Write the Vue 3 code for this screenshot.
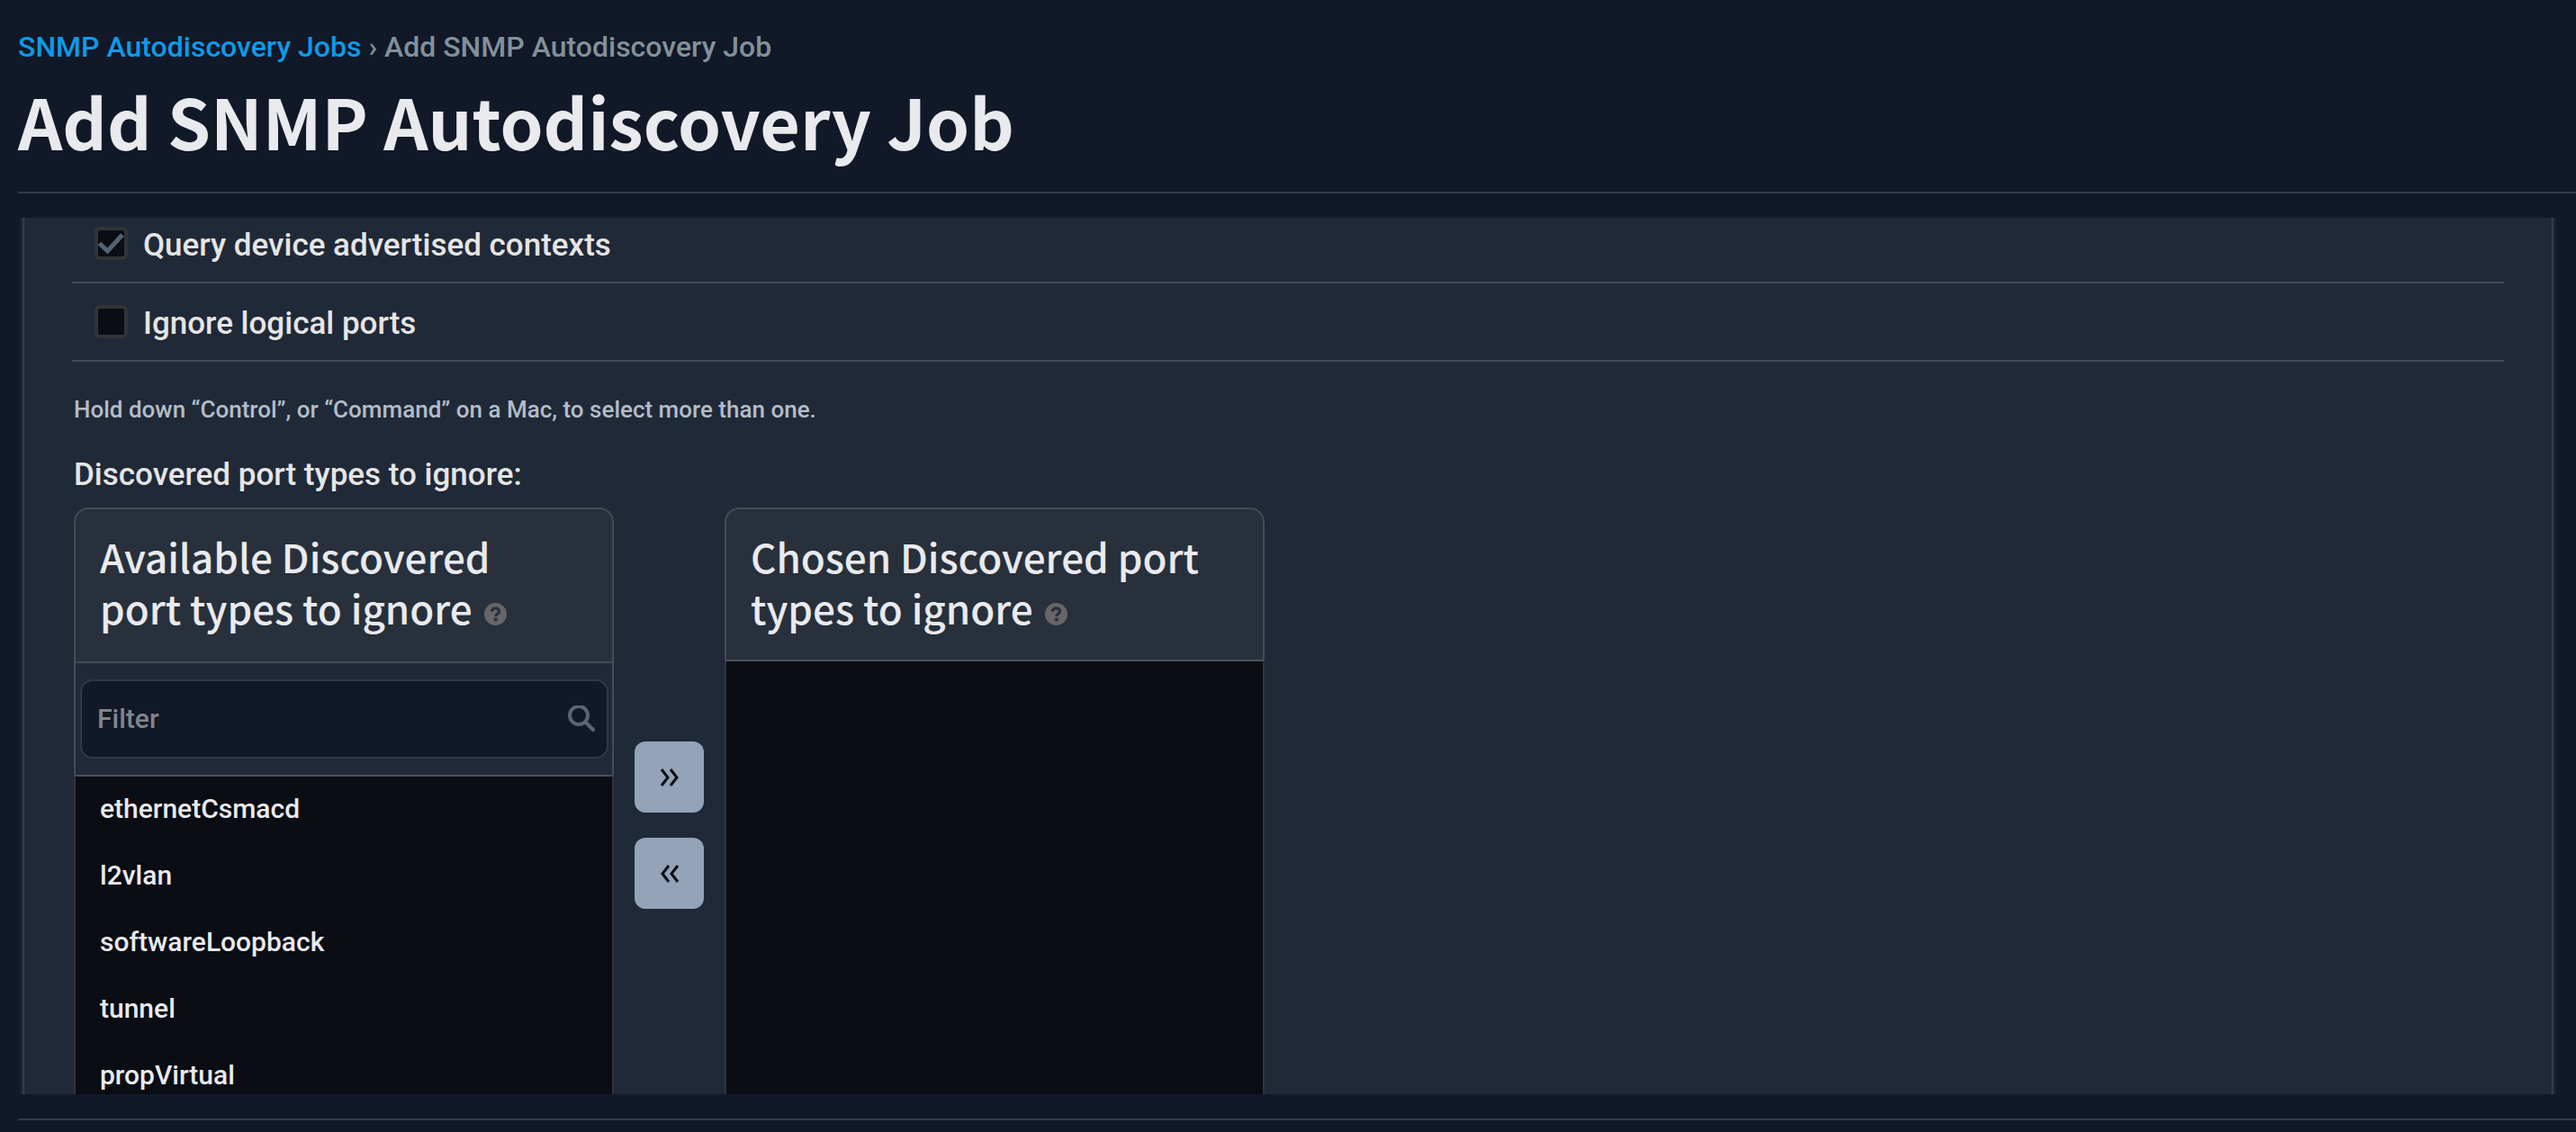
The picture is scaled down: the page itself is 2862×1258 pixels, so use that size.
<script setup>
import { ref } from 'vue'

const queryContexts = ref(true)
const ignoreLogical = ref(false)
const filter = ref('')
const portTypes = ['ethernetCsmacd', 'l2vlan', 'softwareLoopback', 'tunnel', 'propVirtual']
</script>

<template>
  <div class="page">
    <header class="page-header">
      <nav class="breadcrumbs" aria-label="Breadcrumb">
        <a href="#">SNMP Autodiscovery Jobs</a> › Add SNMP Autodiscovery Job
      </nav>
      <h1>Add SNMP Autodiscovery Job</h1>
    </header>

    <main class="scroller">
      <form class="panel" @submit.prevent>
        <div class="check-row">
          <input id="query-contexts" v-model="queryContexts" type="checkbox" />
          <label for="query-contexts">Query device advertised contexts</label>
        </div>
        <div class="check-row">
          <input id="ignore-logical" v-model="ignoreLogical" type="checkbox" />
          <label for="ignore-logical">Ignore logical ports</label>
        </div>

        <section class="field">
          <p class="help">Hold down “Control”, or “Command” on a Mac, to select more than one.</p>
          <label class="field-label" for="ports-available">Discovered port types to ignore:</label>

          <div class="selector">
            <div class="box">
              <h2 class="box-title">
                Available Discovered port types to ignore
                <svg class="hint" viewBox="0 0 24 24" aria-hidden="true">
                  <circle cx="12" cy="12" r="12" />
                  <path d="M8 9.200C8.200 6.900 9.800 5.800 12 5.800c2.300 0 3.900 1.200 3.900 3.200 0 2.700-3.700 2.800-3.700 5.400" />
                  <rect x="10.500" y="16" width="3.500" height="3.500" />
                </svg>
              </h2>
              <div class="filter-row">
                <div class="filter">
                  <input v-model="filter" type="text" placeholder="Filter" aria-label="Filter" />
                  <svg class="search" viewBox="0 0 30 30" aria-hidden="true">
                    <circle cx="12" cy="11" r="10" />
                    <path d="M19.500 18.500L28 27" />
                  </svg>
                </div>
              </div>
              <select id="ports-available" class="list" multiple>
                <option v-for="name in portTypes" :key="name" :value="name">{{ name }}</option>
              </select>
            </div>

            <div class="movers">
              <button type="button" aria-label="Choose">
                <svg viewBox="0 0 24 20" aria-hidden="true"><path d="M3 1l7 9-7 9M13 1l7 9-7 9" /></svg>
              </button>
              <button type="button" aria-label="Remove">
                <svg viewBox="0 0 24 20" aria-hidden="true"><path d="M11 1l-7 9 7 9M21 1l-7 9 7 9" /></svg>
              </button>
            </div>

            <div class="box">
              <h2 class="box-title chosen">
                Chosen Discovered port types to ignore
                <svg class="hint" viewBox="0 0 24 24" aria-hidden="true">
                  <circle cx="12" cy="12" r="12" />
                  <path d="M8 9.200C8.200 6.900 9.800 5.800 12 5.800c2.300 0 3.900 1.200 3.900 3.200 0 2.700-3.700 2.800-3.700 5.400" />
                  <rect x="10.500" y="16" width="3.500" height="3.500" />
                </svg>
              </h2>
              <select class="list" multiple aria-label="Chosen Discovered port types to ignore"></select>
            </div>
          </div>
        </section>
      </form>
    </main>

    <footer class="page-footer"></footer>
  </div>
</template>

<style>
body {
  margin: 0;
  background: #111827;
}
</style>

<style scoped>
* {
  box-sizing: border-box;
}

.page {
  display: flex;
  flex-direction: column;
  height: 100vh;
  background: #111827;
  color: #e5e5e5;
  font-family: Roboto, "Liberation Sans", sans-serif;
  font-size: 35px;
  font-weight: 500;
}

.page-header {
  margin-left: 20px;
  padding: 32px 0 29px;
  border-bottom: 2px solid #333a49;
}

.breadcrumbs {
  font-size: 32px;
  line-height: 40px;
  color: #82919b;
}

.breadcrumbs a {
  color: #0c9be8;
  text-decoration: none;
}

h1 {
  margin: 16px 0 4px;
  font: 700 77px/92px "Noto Sans CJK SC", "Noto Sans", sans-serif;
  color: #e9eaee;
}

.scroller {
  flex: 1;
  min-height: 0;
  margin: 27px 20px;
  padding: 0 6px;
  overflow: hidden;
}

.panel {
  margin-top: -14px;
  padding: 0 53px;
  border: solid #434a55;
  border-width: 0 1px;
  background: #202937;
  box-shadow: 0 0 6px #4b515e;
}

.check-row {
  display: flex;
  align-items: center;
  gap: 17px;
  height: 87px;
  padding-left: 25px;
  border-bottom: 2px solid #414958;
}

.check-row label {
  padding-top: 4px;
  line-height: 40px;
}

.check-row input {
  appearance: none;
  width: 37px;
  height: 37px;
  margin: 0;
  border: 4px solid #333437;
  border-radius: 6px;
  background: #0a0d14;
}

.check-row input:checked {
  background: #0a0d14 url("data:image/svg+xml,%3Csvg xmlns='http://www.w3.org/2000/svg' viewBox='0 0 29 29'%3E%3Cpath d='M1.500 14.500L10.500 23 27 5' fill='none' stroke='%23566270' stroke-width='5'/%3E%3C/svg%3E") center / 29px 29px no-repeat;
}

.field {
  padding: 37px 2px 0;
}

.help {
  margin: 0 0 37px;
  font-size: 26px;
  line-height: 32px;
  color: #b3bdc8;
}

.field-label {
  display: block;
  line-height: 40px;
}

.selector {
  display: flex;
  align-items: flex-start;
  gap: 23px;
  margin-top: 16px;
}

.box {
  display: flex;
  flex-direction: column;
  width: 600px;
}

.box-title {
  margin: 0;
  padding: 24px 44px 31px 27px;
  border: 2px solid #434d58;
  border-radius: 16px 16px 0 0;
  background: #27303b;
  font: 500 44px/57px "Noto Sans CJK SC", "Noto Sans", sans-serif;
  color: #e9eaee;
}

.box-title.chosen {
  padding-right: 27px;
  padding-bottom: 29px;
  border-bottom: 0;
}

.hint {
  width: 25px;
  height: 25px;
  margin-left: 3px;
  vertical-align: -1px;
  fill: #666;
}

.hint path {
  fill: none;
  stroke: #27303b;
  stroke-width: 3;
}

.hint rect {
  fill: #27303b;
}

.filter-row {
  padding: 18px 4px 18px 5px;
  border: solid #434d58;
  border-width: 0 2px;
}

.filter {
  display: flex;
  align-items: center;
  height: 88px;
  padding: 0 13px 0 17px;
  border: 2px solid #30384a;
  border-radius: 14px;
  background: #111827;
}

.filter input {
  flex: 1;
  min-width: 0;
  padding: 0;
  border: 0;
  outline: 0;
  background: none;
  font: 500 30px/36px Roboto, sans-serif;
  color: #e9eaee;
}

.filter input::placeholder {
  color: #81858d;
  opacity: 1;
}

.search {
  width: 30px;
  height: 30px;
  fill: none;
  stroke: #5b6674;
  stroke-width: 4;
  stroke-linecap: round;
}

.list {
  width: 100%;
  height: 600px;
  margin: 0;
  padding: 0;
  overflow: hidden;
  border: 2px solid #333438;
  border-top-color: #4b535e;
  border-radius: 0;
  outline: 0;
  background: #0a0d14;
  font: 500 30px/36px Roboto, sans-serif;
  color: #e9eaee;
}

.list option {
  height: 74px;
  padding: 18px 27px;
  font-weight: 500;
  line-height: 36px;
}

.movers {
  display: flex;
  flex-direction: column;
  gap: 28px;
  margin-top: 260px;
}

.movers button {
  display: grid;
  place-items: center;
  width: 77px;
  height: 79px;
  padding: 0;
  border: 0;
  border-radius: 12px;
  background: #94a3b8;
}

.movers svg {
  width: 24px;
  height: 20px;
  fill: none;
  stroke: #0a0d14;
  stroke-width: 3;
}

.page-footer {
  height: 15px;
  margin-left: 20px;
  border-top: 2px solid #333a49;
}
</style>
